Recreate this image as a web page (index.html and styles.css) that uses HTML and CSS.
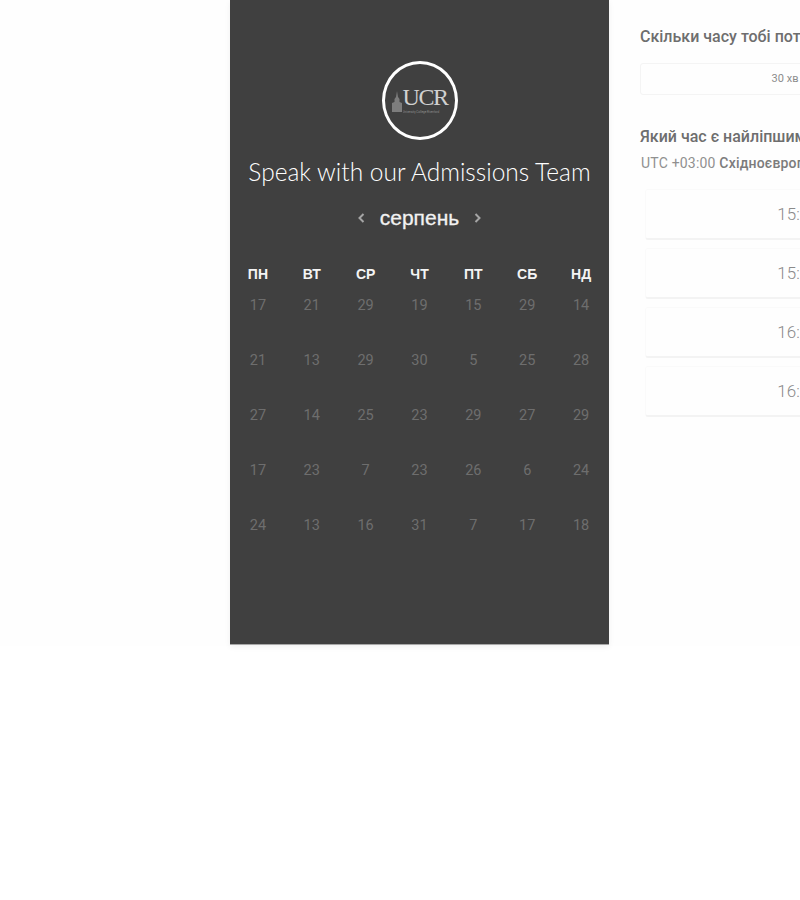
FILE: index.html
```html
<!DOCTYPE html>
<html lang="uk">

<head>
    <meta charset="UTF-8">
    <meta name="viewport" content="width=device-width, initial-scale=1.0">
    <title>Speak with our Admissions Team</title>

    <link rel="stylesheet" href="styles.css">
</head>

<body>

    <div class="booking">
        <div class="calendar">
            <div class="logo">
                <svg class="logo-tower" width="10" height="21" viewBox="0 0 10 21">
                    <path d="M5 0 L6 6 L7.5 8 L7.5 11 L10 12 L10 21 L0 21 L0 12 L2.5 11 L2.5 8 L4 6 Z" fill="#7d7d7d" />
                </svg>
                <div class="logo-text">
                    <div class="logo-name">UCR</div>
                    <div class="logo-sub">University College Riverford</div>
                </div>
            </div>

            <h1 class="team">Speak with our Admissions Team</h1>

            <div class="month">
                <svg class="arrow" width="7" height="10" viewBox="0 0 7 10">
                    <path d="M5.5 1 L1.5 5 L5.5 9" />
                </svg>
                <span class="month-name">серпень</span>
                <svg class="arrow" width="7" height="10" viewBox="0 0 7 10">
                    <path d="M1.5 1 L5.5 5 L1.5 9" />
                </svg>
            </div>

            <div class="days">
                <div class="day-name">ПН</div>
                <div class="day-name">ВТ</div>
                <div class="day-name">СР</div>
                <div class="day-name">ЧТ</div>
                <div class="day-name">ПТ</div>
                <div class="day-name">СБ</div>
                <div class="day-name">НД</div>

                <div class="date">17</div>
                <div class="date">21</div>
                <div class="date">29</div>
                <div class="date">19</div>
                <div class="date">15</div>
                <div class="date">29</div>
                <div class="date">14</div>

                <div class="date">21</div>
                <div class="date">13</div>
                <div class="date">29</div>
                <div class="date">30</div>
                <div class="date">5</div>
                <div class="date">25</div>
                <div class="date">28</div>

                <div class="date">27</div>
                <div class="date">14</div>
                <div class="date">25</div>
                <div class="date">23</div>
                <div class="date">29</div>
                <div class="date">27</div>
                <div class="date">29</div>

                <div class="date">17</div>
                <div class="date">23</div>
                <div class="date">7</div>
                <div class="date">23</div>
                <div class="date">26</div>
                <div class="date">6</div>
                <div class="date">24</div>

                <div class="date">24</div>
                <div class="date">13</div>
                <div class="date">16</div>
                <div class="date">31</div>
                <div class="date">7</div>
                <div class="date">17</div>
                <div class="date">18</div>
            </div>
        </div>

        <div class="times">
            <h2 class="question">Скільки часу тобі потрібно?</h2>
            <div class="duration">30 хв</div>

            <h2 class="question question-time">Який час є найліпшим для тебе?</h2>
            <p class="zone">UTC +03:00 <b>Східноєвропейський час</b></p>

            <div class="slot">15:00</div>
            <div class="slot">15:30</div>
            <div class="slot">16:00</div>
            <div class="slot">16:30</div>
        </div>
    </div>

</body>

</html>
```

FILE: styles.css
```css
html,
body {
    margin: 0;
    height: 900px;
    overflow: hidden;
    background-color: #fff;
}

body {
    font-family: Roboto, "Liberation Sans", sans-serif;
}

.booking {
    display: flex;
    width: 1000px;
    height: 646px;
    padding-left: 230px;
    background-color: #fefefe;
}

/* left side with the calendar */
.calendar {
    flex: none;
    width: 379px;
    height: 645px;
    padding-top: 61px;
    box-sizing: border-box;
    background-color: #404040;
    border-bottom: 1px solid #a8a8a8;
    box-shadow: 0 2px 6px rgba(0, 0, 0, 0.06);
}

.logo {
    display: flex;
    align-items: center;
    justify-content: center;
    gap: 1px;
    width: 76px;
    height: 79px;
    margin: 0 auto;
    box-sizing: border-box;
    border: 3px solid #fff;
    border-radius: 50%;
}

.logo-tower {
    margin-top: 1px;
}

.logo-name {
    font-family: "Liberation Serif", serif;
    font-size: 24px;
    line-height: 20px;
    letter-spacing: -1.5px;
    color: #d0d0d0;
}

.logo-sub {
    width: 44px;
    margin-top: 3px;
    overflow: hidden;
    white-space: nowrap;
    font-size: 3px;
    line-height: 4px;
    color: #8f8f8f;
}

.team {
    margin: 15px 0 0;
    font-family: Lato, sans-serif;
    font-size: 24.5px;
    font-weight: 300;
    line-height: 34px;
    text-align: center;
    color: #fff;
}

.month {
    display: flex;
    align-items: center;
    justify-content: center;
    gap: 15px;
    margin-top: 15px;
    height: 28px;
}

.month-name {
    font-family: "Liberation Sans", sans-serif;
    font-size: 21px;
    color: #f2f2f2;
    -webkit-text-stroke: 0.3px #f2f2f2;
}

.arrow path {
    fill: none;
    stroke: #a5a5a5;
    stroke-width: 2;
}

.days {
    display: grid;
    grid-template-columns: repeat(7, 1fr);
    grid-auto-rows: 55px;
    margin-top: 34px;
    padding: 0 1px;
}

.days .day-name {
    height: 32px;
}

.day-name {
    font-family: "Liberation Sans", sans-serif;
    font-size: 14px;
    font-weight: bold;
    line-height: 16px;
    text-align: center;
    color: #f4f4f4;
}

.date {
    font-size: 14.5px;
    line-height: 16px;
    text-align: center;
    color: #6e6e6e;
    transform: translateY(-23px);
}

/* right side with the times */
.times {
    flex: none;
    width: 330px;
    padding: 28px 0 0 31px;
    color: #6e6e6e;
}

.question {
    margin: 0;
    font-size: 16px;
    font-weight: 500;
    line-height: 18px;
    white-space: nowrap;
}

.duration {
    width: 290px;
    height: 32px;
    margin-top: 17px;
    box-sizing: border-box;
    border: 1px solid #f4f4f4;
    border-radius: 3px;
    font-size: 11px;
    line-height: 30px;
    text-align: center;
    color: #8c8c8c;
}

.question-time {
    margin-top: 33px;
}

.zone {
    margin: 8px 0 17px 1px;
    font-size: 14px;
    letter-spacing: 0.2px;
    line-height: 18px;
    white-space: nowrap;
    color: #909090;
}

.zone b {
    font-weight: 500;
    color: #7c7c7c;
}

.slot {
    width: 306px;
    height: 51px;
    margin: 0 0 8px 5px;
    box-sizing: border-box;
    border: 1px solid #fafafa;
    border-bottom: 2px solid #f3f3f3;
    border-radius: 3px;
    font-size: 17px;
    font-weight: 300;
    line-height: 48px;
    text-align: center;
    color: #8a8a8a;
}
```
